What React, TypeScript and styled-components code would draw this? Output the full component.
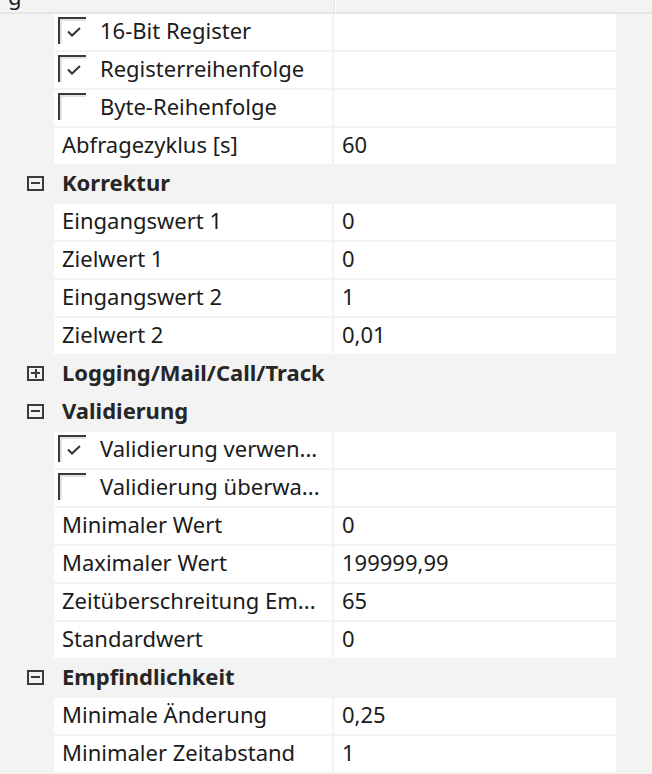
import React from 'react';
import styled, { createGlobalStyle } from 'styled-components';

const GlobalStyle = createGlobalStyle`
  html, body {
    margin: 0;
    padding: 0;
    background: #f3f3f3;
  }
  body {
    font-family: 'Noto Sans', 'Open Sans', sans-serif;
    color: #1b1b1b;
  }
`;

const Page = styled.div`
  width: 652px;
  height: 774px;
  overflow: hidden;
  background: #f3f3f3;
`;

const Header = styled.div`
  display: grid;
  grid-template-columns: 334px 2px 1fr;
  height: 12px;
  border-bottom: 2px solid #e6e6e6;
  overflow: hidden;
`;

const HeaderCell = styled.div`
  overflow: hidden;
  font-size: 22px;
  line-height: 22px;
  padding-left: 8px;
  & > span {
    display: block;
    margin-top: -15px;
  }
`;

const HeaderDivider = styled.div`
  background: #e2e2e2;
  border-right: 1px solid #ffffff;
`;

const Rows = styled.div`
  display: flex;
  flex-direction: column;
  gap: 2px;
`;

const Row = styled.div`
  display: grid;
  grid-template-columns: 54px 278px 284px;
  height: 36px;
  font-size: 22px;
`;

const Cell = styled.div<{ $value?: boolean; $checkbox?: boolean }>`
  display: flex;
  align-items: center;
  box-sizing: border-box;
  padding-bottom: 4px;
  background: #ffffff;
  padding-left: ${({ $checkbox }) => ($checkbox ? '4px' : '8px')};
  margin-left: ${({ $value }) => ($value ? '2px' : '0')};
  white-space: nowrap;
  overflow: hidden;
`;

const CategoryRow = styled.div`
  display: flex;
  align-items: center;
  box-sizing: border-box;
  height: 36px;
  padding-bottom: 4px;
  font-size: 22px;
  font-weight: 700;
  color: #262626;
`;

const Expander = styled.span<{ $open: boolean }>`
  position: relative;
  box-sizing: border-box;
  flex: none;
  width: 17px;
  height: 15px;
  border: 2px solid #3b3b3b;
  margin-left: 27px;
  margin-right: 18px;
  margin-top: 2px;
  &::before {
    content: '';
    position: absolute;
    left: 2px;
    right: 2px;
    top: 4.5px;
    height: 2px;
    background: #3b3b3b;
  }
  &::after {
    content: '';
    display: ${({ $open }) => ($open ? 'none' : 'block')};
    position: absolute;
    top: 1px;
    bottom: 1px;
    left: 5.5px;
    width: 2px;
    background: #3b3b3b;
  }
`;

const CheckBox = styled.span`
  display: flex;
  align-items: center;
  justify-content: center;
  box-sizing: border-box;
  flex: none;
  width: 28px;
  height: 27px;
  margin-right: 14px;
  border-top: 2px solid #3a3a3a;
  border-left: 2px solid #3a3a3a;
  box-shadow: inset 2px 2px 0 #e3e3e3;
  svg {
    margin-top: 2px;
    margin-left: 2px;
  }
`;

type Item =
  | { kind: 'check'; label: string; checked: boolean }
  | { kind: 'prop'; label: string; value: string }
  | { kind: 'cat'; label: string; open: boolean };

const items: Item[] = [
  { kind: 'check', label: '16-Bit Register', checked: true },
  { kind: 'check', label: 'Registerreihenfolge', checked: true },
  { kind: 'check', label: 'Byte-Reihenfolge', checked: false },
  { kind: 'prop', label: 'Abfragezyklus [s]', value: '60' },
  { kind: 'cat', label: 'Korrektur', open: true },
  { kind: 'prop', label: 'Eingangswert 1', value: '0' },
  { kind: 'prop', label: 'Zielwert 1', value: '0' },
  { kind: 'prop', label: 'Eingangswert 2', value: '1' },
  { kind: 'prop', label: 'Zielwert 2', value: '0,01' },
  { kind: 'cat', label: 'Logging/Mail/Call/Track', open: false },
  { kind: 'cat', label: 'Validierung', open: true },
  { kind: 'check', label: 'Validierung verwen...', checked: true },
  { kind: 'check', label: 'Validierung überwa...', checked: false },
  { kind: 'prop', label: 'Minimaler Wert', value: '0' },
  { kind: 'prop', label: 'Maximaler Wert', value: '199999,99' },
  { kind: 'prop', label: 'Zeitüberschreitung Em...', value: '65' },
  { kind: 'prop', label: 'Standardwert', value: '0' },
  { kind: 'cat', label: 'Empfindlichkeit', open: true },
  { kind: 'prop', label: 'Minimale Änderung', value: '0,25' },
  { kind: 'prop', label: 'Minimaler Zeitabstand', value: '1' },
];

const Check = () => (
  <svg width="14" height="10" viewBox="0 0 14 10">
    <polyline points="1,4.5 5,8.5 13,1" fill="none" stroke="#333" strokeWidth="2" />
  </svg>
);

export default function App() {
  return (
    <Page>
      <GlobalStyle />
      <Header>
        <HeaderCell>
          <span>g</span>
        </HeaderCell>
        <HeaderDivider />
        <div />
      </Header>
      <Rows>
        {items.map((item, i) => {
          if (item.kind === 'cat') {
            return (
              <CategoryRow key={i}>
                <Expander $open={item.open} />
                {item.label}
              </CategoryRow>
            );
          }
          if (item.kind === 'check') {
            return (
              <Row key={i}>
                <div />
                <Cell $checkbox>
                  <CheckBox>{item.checked && <Check />}</CheckBox>
                  {item.label}
                </Cell>
                <Cell $value />
              </Row>
            );
          }
          return (
            <Row key={i}>
              <div />
              <Cell>{item.label}</Cell>
              <Cell $value>{item.value}</Cell>
            </Row>
          );
        })}
      </Rows>
    </Page>
  );
}
